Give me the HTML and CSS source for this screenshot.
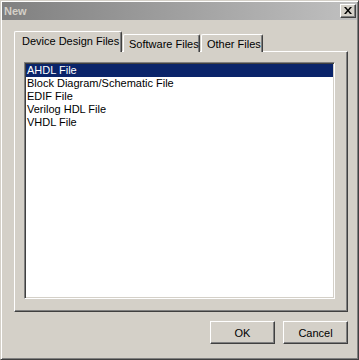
FILE: index.html
```html
<!DOCTYPE html>
<html>
<head>
<meta charset="utf-8">
<link rel="stylesheet" href="styles.css">
</head>
<body>
<div class="window">
  <div class="titlebar">
    <span class="title">New</span>
    <button class="close" aria-label="Close">
      <svg width="8" height="7" viewBox="0 0 8 7"><path d="M0 0h2l2 2.5L6 0h2L5 3.5 8 7H6L4 4.5 2 7H0l3-3.5z" fill="#000"/></svg>
    </button>
  </div>
  <div class="body">
    <div class="tabs">
      <div class="tab selected">Device Design Files</div>
      <div class="tab soft">Software Files</div>
      <div class="tab other">Other Files</div>
    </div>
    <div class="panel">
      <ul class="list">
        <li class="item active">AHDL File</li>
        <li class="item">Block Diagram/Schematic File</li>
        <li class="item">EDIF File</li>
        <li class="item">Verilog HDL File</li>
        <li class="item">VHDL File</li>
      </ul>
    </div>
    <div class="buttons">
      <button class="btn">OK</button>
      <button class="btn">Cancel</button>
    </div>
  </div>
</div>
</body>
</html>
```

FILE: styles.css
```css
* { box-sizing: border-box; }
html, body { margin: 0; padding: 0; background: #d4d0c8; }
body {
  font-family: "Liberation Sans", Arial, sans-serif;
  font-size: 11px;
  color: #000;
}
.window {
  width: 359px;
  height: 360px;
  background: #d4d0c8;
  border: 1px solid;
  border-color: #d4d0c8 #404040 #404040 #d4d0c8;
  box-shadow: inset 1px 1px #fff, inset -1px -1px #808080;
  padding: 1px;
  display: flex;
  flex-direction: column;
}
.titlebar {
  height: 18px;
  background: linear-gradient(to right, #808080, #c0c0c0);
  display: flex;
  align-items: center;
  justify-content: space-between;
  padding: 0 1px 0 2px;
}
.title {
  color: #d4d0c8;
  font-weight: bold;
  font-size: 11px;
}
.close {
  width: 16px;
  height: 14px;
  padding: 0;
  margin: 0;
  background: #d4d0c8;
  border: 1px solid;
  border-color: #fff #404040 #404040 #fff;
  box-shadow: inset -1px -1px #808080;
  display: flex;
  align-items: center;
  justify-content: center;
}
.close svg { display: block; margin-top: -1px; }
.body {
  flex: 1;
  padding: 12px 9px 0 12px;
  display: flex;
  flex-direction: column;
}
.tabs {
  display: flex;
  align-items: flex-end;
  height: 20px;
  margin-bottom: -1px;
  position: relative;
  z-index: 1;
}
.tab {
  height: 18px;
  padding: 3px 6px 0 5px;
  border-top: 1px solid #fff;
  border-left: 1px solid #fff;
  border-right: 1px solid #404040;
  box-shadow: inset -1px 0 #808080;
  border-radius: 2px 2px 0 0;
  background: #d4d0c8;
  white-space: nowrap;
}
.tab.selected {
  width: 108px;
  height: 21px;
  padding: 3px 0 0 7px;
}
.tab.soft { width: 77px; margin-left: 1px; padding-left: 5px; }
.tab.other { width: 62px; margin-left: 1px; padding-left: 5px; }
.panel {
  width: 334px;
  height: 261px;
  border-top: 1px solid #fff;
  border-left: 1px solid #fff;
  border-right: 1px solid #404040;
  border-bottom: 1px solid #404040;
  box-shadow: inset -1px -1px #808080;
  padding: 10px 0 0 9px;
}
.list {
  list-style: none;
  margin: 0;
  width: 311px;
  height: 237px;
  background: #fff;
  border: 1px solid;
  border-color: #808080 #fff #fff #808080;
  box-shadow: inset 1px 1px #404040, inset -1px -1px #d4d0c8;
  padding: 1px;
}
.item {
  height: 13px;
  line-height: 13px;
  padding-left: 1px;
  white-space: nowrap;
}
.item.active {
  background: #0a246a;
  color: #fff;
}
.buttons {
  display: flex;
  justify-content: flex-end;
  gap: 8px;
  margin-top: 9px;
  width: 334px;
}
.btn {
  width: 65px;
  height: 23px;
  padding: 0;
  font-family: "Liberation Sans", Arial, sans-serif;
  font-size: 11px;
  color: #000;
  background: #d4d0c8;
  border: 1px solid;
  border-color: #fff #404040 #404040 #fff;
  box-shadow: inset -1px -1px #808080;
}
```
